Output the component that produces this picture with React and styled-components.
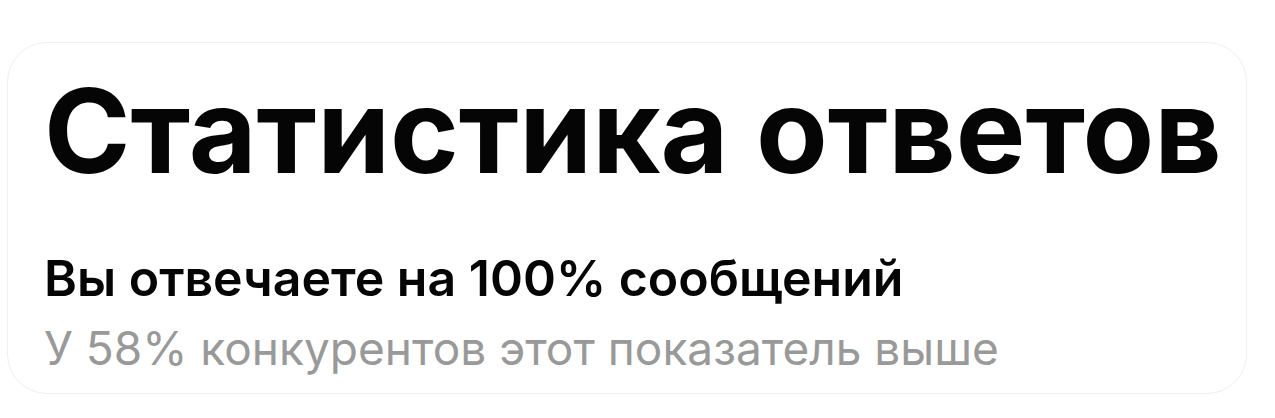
import React from "react";
import styled, { createGlobalStyle } from "styled-components";

const GlobalStyle = createGlobalStyle`
  * { box-sizing: border-box; }
  body {
    margin: 0;
    background: #fff;
    font-family: Inter, "Noto Sans", sans-serif;
  }
`;

const Page = styled.main`
  padding: 42px 28px 24px 7px;
`;

const Card = styled.section`
  padding: 28px 36px 10px;
  border: 1px solid #efefef;
  border-radius: 40px;
  background: #fff;
`;

const Title = styled.h1`
  margin: 0 0 52px;
  color: #050505;
  font-size: 117px;
  line-height: 120px;
  font-weight: 700;
  white-space: nowrap;
`;

const Summary = styled.p`
  margin: 0;
  color: #050505;
  font-size: 50px;
  line-height: 70px;
  font-weight: 600;
  white-space: nowrap;
`;

const Comparison = styled.p`
  margin: 0;
  color: #999;
  font-size: 46px;
  line-height: 70px;
  white-space: nowrap;
`;

export default function App() {
  return (
    <>
      <GlobalStyle />
      <Page>
        <Card>
          <Title>Статистика ответов</Title>
          <Summary>Вы отвечаете на 100% сообщений</Summary>
          <Comparison>У 58% конкурентов этот показатель выше</Comparison>
        </Card>
      </Page>
    </>
  );
}
